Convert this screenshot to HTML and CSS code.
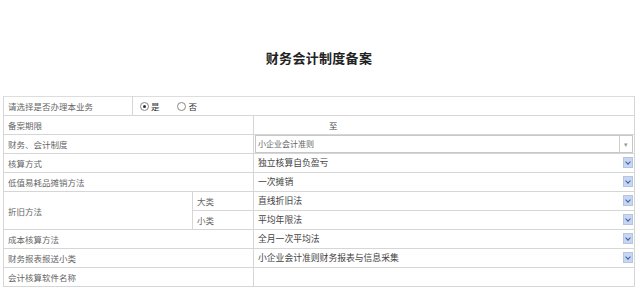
FILE: index.html
```html
<!DOCTYPE html>
<html lang="zh">
<head>
  <meta charset="UTF-8" />
  <title>财务会计制度备案</title>
  <link rel="stylesheet" href="styles.css">
</head>
<body>

  <h1 class="titre">财务会计制度备案</h1>

  <table class="form-table">
    <colgroup>
      <col class="c1"><col class="c2"><col class="c3"><col class="c4">
    </colgroup>
    <tr>
      <td class="label">请选择是否办理本业务</td>
      <td colspan="3" class="radios">
        <span class="radio checked"></span><span class="radio-txt">是</span>
        <span class="radio"></span><span class="radio-txt">否</span>
      </td>
    </tr>
    <tr>
      <td colspan="3" class="label">备案期限</td>
      <td class="periode"><span>至</span></td>
    </tr>
    <tr>
      <td colspan="3" class="label">财务、会计制度</td>
      <td class="cell-box">
        <div class="combo">
          <span class="combo-txt">小企业会计准则</span>
          <span class="combo-arrow">▾</span>
        </div>
      </td>
    </tr>
    <tr>
      <td colspan="3" class="label">核算方式</td>
      <td class="select"><span>独立核算自负盈亏</span><span class="sel-btn"></span></td>
    </tr>
    <tr>
      <td colspan="3" class="label">低值易耗品摊销方法</td>
      <td class="select"><span>一次摊销</span><span class="sel-btn"></span></td>
    </tr>
    <tr>
      <td colspan="2" rowspan="2" class="label">折旧方法</td>
      <td class="label">大类</td>
      <td class="select"><span>直线折旧法</span><span class="sel-btn"></span></td>
    </tr>
    <tr>
      <td class="label">小类</td>
      <td class="select"><span>平均年限法</span><span class="sel-btn"></span></td>
    </tr>
    <tr>
      <td colspan="3" class="label">成本核算方法</td>
      <td class="select"><span>全月一次平均法</span><span class="sel-btn"></span></td>
    </tr>
    <tr>
      <td colspan="3" class="label">财务报表报送小类</td>
      <td class="select"><span>小企业会计准则财务报表与信息采集</span><span class="sel-btn"></span></td>
    </tr>
    <tr>
      <td colspan="3" class="label">会计核算软件名称</td>
      <td></td>
    </tr>
  </table>

</body>
</html>
```

FILE: styles.css
```css
body, html {
  margin: 0;
  padding: 0;
  background: #fff;
  font-family: "Noto Sans CJK SC", "Noto Sans", sans-serif;
  color: #555;
}

body {
  padding: 0 5px 0 3px;
}

.titre {
  margin: 0;
  padding-top: 48px;
  height: 48px;
  text-align: center;
  font-size: 13px;
  line-height: 20px;
  font-weight: bold;
  color: #222;
  letter-spacing: 0.3px;
}

.form-table {
  width: 632px;
  border-collapse: collapse;
  table-layout: fixed;
  font-size: 8.5px;
}

.c1 { width: 129px; }
.c2 { width: 60px; }
.c3 { width: 61px; }

.form-table td {
  height: 18px;
  padding: 0 0 0 4px;
  border: 1px solid #d6d6d6;
  line-height: 18px;
  white-space: nowrap;
  overflow: hidden;
}

.form-table tr:first-child td {
  border-top-color: #ddd;
}

.label {
  color: #666;
}

.radios {
  padding-left: 7px !important;
}

.radio {
  display: inline-block;
  width: 7px;
  height: 7px;
  border: 1px solid #888;
  border-radius: 50%;
  vertical-align: -1px;
  position: relative;
  background: #fff;
}

.radio.checked::after {
  content: "";
  position: absolute;
  left: 2px;
  top: 2px;
  width: 3px;
  height: 3px;
  border-radius: 50%;
  background: #333;
}

.radio-txt {
  margin: 0 16px 0 2px;
  color: #333;
}

.periode span {
  padding-left: 71px;
  color: #444;
}

.cell-box {
  padding: 0 !important;
}

.combo {
  display: flex;
  height: 16px;
  margin: 0 1px 0 1px;
  border: 1px solid #c8c8c8;
  align-items: center;
  font-size: 8px;
  color: #666;
}

.combo-txt {
  flex: 1;
  padding-left: 2px;
}

.combo-arrow {
  width: 12px;
  height: 16px;
  border-left: 1px solid #d0d0d0;
  text-align: center;
  font-size: 7px;
  line-height: 16px;
  color: #999;
}

.select {
  color: #444;
  font-size: 8.8px;
}

.select span:first-child {
  vertical-align: top;
}

.sel-btn {
  float: right;
  width: 10px;
  height: 11px;
  margin: 3px 1px 0 0;
  background: #c9d6ef;
  border: 1px solid #b3c4e4;
  box-sizing: border-box;
  position: relative;
}

.sel-btn::after {
  content: "";
  position: absolute;
  left: 2px;
  top: 2px;
  width: 3px;
  height: 3px;
  border-right: 1.5px solid #3a5fa8;
  border-bottom: 1.5px solid #3a5fa8;
  transform: rotate(45deg);
}
```
